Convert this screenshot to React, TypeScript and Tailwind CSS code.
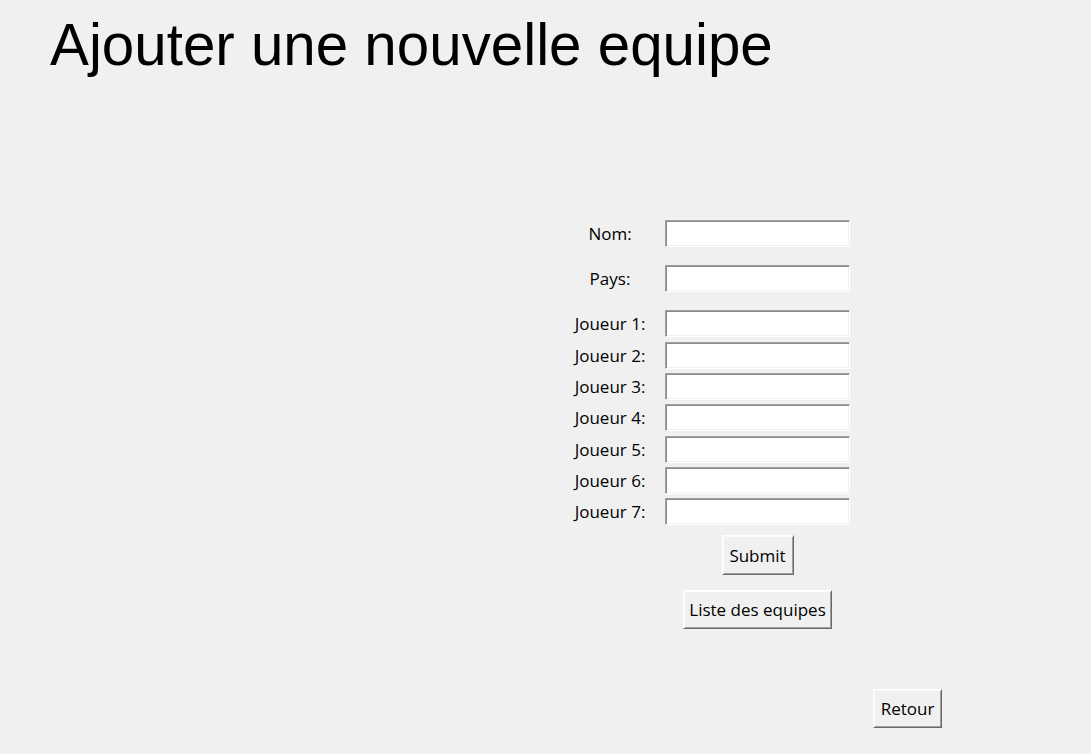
import React from "react";

const players = [
  { label: "Joueur 1:", mt: "mt-[18px]" },
  { label: "Joueur 2:", mt: "mt-[5px]" },
  { label: "Joueur 3:", mt: "mt-[4px]" },
  { label: "Joueur 4:", mt: "mt-[4px]" },
  { label: "Joueur 5:", mt: "mt-[5px]" },
  { label: "Joueur 6:", mt: "mt-[4px]" },
  { label: "Joueur 7:", mt: "mt-[4px]" },
];

function Entry() {
  return (
    <input
      type="text"
      className="ml-[15px] w-[185px] h-[27px] bg-white outline-none border border-t-[#a0a0a0] border-l-[#a0a0a0] border-r-white border-b-white shadow-[inset_1px_1px_0_#8a8a8a,inset_-1px_-1px_0_#f0f0f0]"
    />
  );
}

function Row({ label, mt }: { label: string; mt: string }) {
  return (
    <div className={`flex items-center ${mt}`}>
      <div className="w-[80px] text-center text-[17px] leading-none text-black">{label}</div>
      <Entry />
    </div>
  );
}

function TkButton({ children, cls }: { children: React.ReactNode; cls: string }) {
  return (
    <button
      className={`${cls} flex items-center justify-center bg-[#f0f0f0] text-[17px] leading-none text-black border border-t-white border-l-white border-r-[#696969] border-b-[#696969] shadow-[inset_1px_1px_0_#fafafa,inset_-1px_-1px_0_#a0a0a0]`}
    >
      {children}
    </button>
  );
}

export default function App() {
  return (
    <div className="w-[1091px] h-[754px] bg-[#f0f0f0] overflow-hidden flex flex-col font-['Open_Sans',sans-serif]">
      <h1 className="pl-[50px] pt-[16px] text-[58.3px] leading-[58px] font-normal text-black font-['Liberation_Sans',Arial,sans-serif] whitespace-nowrap">
        Ajouter une nouvelle equipe
      </h1>
      <div className="mt-[146px] ml-[570px] flex flex-col">
        <Row label="Nom:" mt="" />
        <Row label="Pays:" mt="mt-[18px]" />
        {players.map((p) => (
          <Row key={p.label} label={p.label} mt={p.mt} />
        ))}
        <div className="ml-[95px] w-[185px] flex flex-col items-center">
          <TkButton cls="mt-[10px] w-[72px] h-[40px]">Submit</TkButton>
          <TkButton cls="mt-[15px] w-[149px] h-[39px]">Liste des equipes</TkButton>
        </div>
      </div>
      <div className="ml-[873px] mt-[60px]">
        <TkButton cls="w-[69px] h-[39px]">Retour</TkButton>
      </div>
    </div>
  );
}
